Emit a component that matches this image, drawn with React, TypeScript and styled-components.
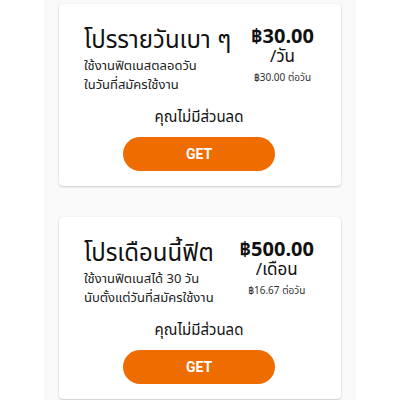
import React from "react";
import styled, { createGlobalStyle } from "styled-components";

const Global = createGlobalStyle`
  html, body { margin: 0; padding: 0; background: #ffffff; }
  body { font-family: "Noto Sans Thai", "Noto Sans", "DejaVu Sans", sans-serif; }
`;

const Column = styled.div`
  width: 312px;
  margin: 0 auto;
  background: #f9f9f9;
  padding: 4px 15px 0;
  box-sizing: border-box;
  display: flex;
  flex-direction: column;
  gap: 31px;
  min-height: 400px;
`;

const Card = styled.div`
  background: #ffffff;
  border-radius: 4px;
  box-shadow: 0 1px 2px rgba(0, 0, 0, 0.18), 0 0 1px rgba(0, 0, 0, 0.08);
  padding: 21px 27px 15px 25px;
  display: flex;
  flex-direction: column;
  height: 182px;
  box-sizing: border-box;
`;

const Top = styled.div`
  display: flex;
  justify-content: space-between;
  align-items: flex-start;
`;

const Left = styled.div`
  display: flex;
  flex-direction: column;
`;

const Title = styled.div`
  font-size: 24px;
  line-height: 32px;
  color: #111;
`;

const Desc = styled.div`
  font-size: 13px;
  line-height: 18.5px;
  color: #222;
`;

const PriceCol = styled.div`
  display: flex;
  flex-direction: column;
  align-items: center;
  text-align: center;
  padding-top: 2px;
`;

const Price = styled.div`
  font-size: 20px;
  font-weight: 700;
  line-height: 21px;
  color: #111;
`;

const Unit = styled.div`
  font-size: 17px;
  line-height: 19px;
  color: #111;
`;

const PerDay = styled.div`
  font-size: 10px;
  line-height: 14px;
  color: #333;
  margin-top: 4px;
`;

const Discount = styled.div`
  text-align: center;
  font-size: 15px;
  line-height: 20px;
  color: #111;
  margin-top: 14px;
`;

const GetButton = styled.button`
  align-self: center;
  width: 152px;
  height: 34px;
  border-radius: 17px;
  border: none;
  background: #ef6c00;
  color: #fff;
  font-family: Roboto, "Liberation Sans", sans-serif;
  font-weight: 700;
  font-size: 14px;
  margin-top: auto;
`;

type Plan = {
  title: string;
  desc: string[];
  price: string;
  unit: string;
  perDay: string;
};

const plans: Plan[] = [
  {
    title: "โปรรายวันเบา ๆ",
    desc: ["ใช้งานฟิตเนสตลอดวัน", "ในวันที่สมัครใช้งาน"],
    price: "฿30.00",
    unit: "/วัน",
    perDay: "฿30.00 ต่อวัน",
  },
  {
    title: "โปรเดือนนี้ฟิต",
    desc: ["ใช้งานฟิตเนสได้ 30 วัน", "นับตั้งแต่วันที่สมัครใช้งาน"],
    price: "฿500.00",
    unit: "/เดือน",
    perDay: "฿16.67 ต่อวัน",
  },
];

export default function App() {
  return (
    <>
      <Global />
      <Column>
        {plans.map((p) => (
          <Card key={p.title}>
            <Top>
              <Left>
                <Title>{p.title}</Title>
                {p.desc.map((d) => (
                  <Desc key={d}>{d}</Desc>
                ))}
              </Left>
              <PriceCol>
                <Price>{p.price}</Price>
                <Unit>{p.unit}</Unit>
                <PerDay>{p.perDay}</PerDay>
              </PriceCol>
            </Top>
            <Discount>คุณไม่มีส่วนลด</Discount>
            <GetButton>GET</GetButton>
          </Card>
        ))}
      </Column>
    </>
  );
}
